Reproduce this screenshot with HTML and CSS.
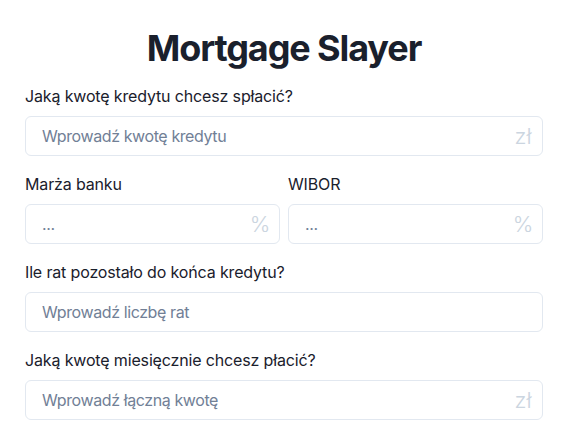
FILE: index.html
```html
<!DOCTYPE html>
<html lang="pl">
<head>
<meta charset="utf-8">
<title>Mortgage Slayer</title>
<link rel="stylesheet" href="styles.css">
</head>
<body>
<main class="container">
  <h1 class="title">Mortgage Slayer</h1>
  <div class="field">
    <label class="label" for="amount">Jaką kwotę kredytu chcesz spłacić?</label>
    <div class="input-group">
      <input class="input" id="amount" type="text" placeholder="Wprowadź kwotę kredytu">
      <span class="addon">zł</span>
    </div>
  </div>
  <div class="row">
    <div class="field">
      <label class="label" for="margin">Marża banku</label>
      <div class="input-group">
        <input class="input" id="margin" type="text" placeholder="...">
        <span class="addon">%</span>
      </div>
    </div>
    <div class="field">
      <label class="label" for="wibor">WIBOR</label>
      <div class="input-group">
        <input class="input" id="wibor" type="text" placeholder="...">
        <span class="addon">%</span>
      </div>
    </div>
  </div>
  <div class="field">
    <label class="label" for="count">Ile rat pozostało do końca kredytu?</label>
    <div class="input-group">
      <input class="input" id="count" type="text" placeholder="Wprowadź liczbę rat">
    </div>
  </div>
  <div class="field">
    <label class="label" for="monthly">Jaką kwotę miesięcznie chcesz płacić?</label>
    <div class="input-group">
      <input class="input" id="monthly" type="text" placeholder="Wprowadź łączną kwotę">
      <span class="addon">zł</span>
    </div>
  </div>
</main>
</body>
</html>
```

FILE: styles.css
```css
html, body {
  margin: 0;
  padding: 0;
  background: #ffffff;
}

body {
  font-family: Inter, "Noto Sans", sans-serif;
  color: #1a202c;
}

.container {
  width: 518px;
  margin-left: 25px;
  padding-top: 26px;
  display: flex;
  flex-direction: column;
  gap: 16px;
}

.title {
  margin: 0 0 -2px;
  font-size: 36px;
  line-height: 44px;
  font-weight: 700;
  letter-spacing: -1.1px;
  text-align: center;
  color: #1a202c;
}

.row {
  display: grid;
  grid-template-columns: 1fr 1fr;
  gap: 8px;
}

.field {
  display: flex;
  flex-direction: column;
}

.label {
  font-size: 16px;
  line-height: 24px;
  font-weight: 400;
  letter-spacing: -0.15px;
  margin-bottom: 8px;
  color: #1a202c;
}

.input-group {
  position: relative;
  display: flex;
}

.input {
  box-sizing: border-box;
  width: 100%;
  height: 40px;
  padding: 0 40px 0 16px;
  border: 1px solid #e2e8f0;
  border-radius: 6px;
  font-family: inherit;
  font-size: 16px;
  letter-spacing: -0.4px;
  color: #1a202c;
  background: #ffffff;
  outline: none;
}

.input::placeholder {
  color: #718096;
  opacity: 1;
}

.addon {
  position: absolute;
  right: 0;
  top: 0;
  width: 40px;
  height: 40px;
  display: flex;
  align-items: center;
  justify-content: center;
  font-size: 22px;
  font-weight: 300;
  color: #cbd5e0;
}
```
